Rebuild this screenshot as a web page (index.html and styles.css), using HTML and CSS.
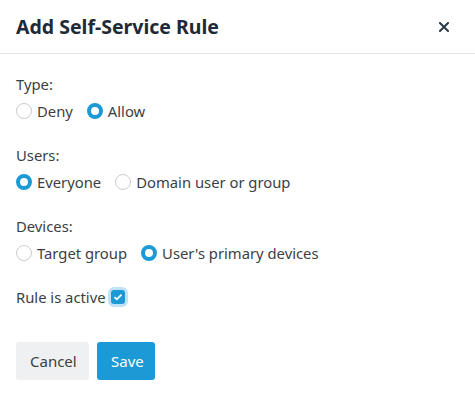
FILE: index.html
```html
<!DOCTYPE html>
<html>
<head>
<meta charset="utf-8">
<link rel="stylesheet" href="styles.css">
</head>
<body>
<div class="modal">
  <div class="header">
    <h1 class="title">Add Self-Service Rule</h1>
    <button class="close" aria-label="Close">
      <svg width="10" height="10" viewBox="0 0 10 10"><path d="M1 1L9 9M9 1L1 9" stroke="#2b3a4a" stroke-width="2" stroke-linecap="square"/></svg>
    </button>
  </div>
  <div class="body">
    <div class="group">
      <div class="label">Type:</div>
      <div class="options">
        <label class="opt"><span class="radio"></span>Deny</label>
        <label class="opt"><span class="radio on"></span>Allow</label>
      </div>
    </div>
    <div class="group">
      <div class="label">Users:</div>
      <div class="options">
        <label class="opt"><span class="radio on"></span>Everyone</label>
        <label class="opt"><span class="radio"></span>Domain user or group</label>
      </div>
    </div>
    <div class="group">
      <div class="label">Devices:</div>
      <div class="options">
        <label class="opt"><span class="radio"></span>Target group</label>
        <label class="opt"><span class="radio on"></span>User's primary devices</label>
      </div>
    </div>
    <div class="active">
      <span>Rule is active</span>
      <span class="check">
        <svg width="10" height="8" viewBox="0 0 10 8"><path d="M1.5 4.2L3.8 6.3L8.5 1.6" fill="none" stroke="#fff" stroke-width="1.8"/></svg>
      </span>
    </div>
    <div class="actions">
      <button class="btn cancel">Cancel</button>
      <button class="btn save">Save</button>
    </div>
  </div>
</div>
</body>
</html>
```
FILE: styles.css
```css
* { box-sizing: border-box; }
html, body { margin: 0; padding: 0; background: #fff; }
body {
  font-family: "Noto Sans", "Open Sans", sans-serif;
  color: #3b3f44;
  font-size: 14.8px;
  width: 475px;
  height: 402px;
  overflow: hidden;
}
.header {
  height: 54px;
  border-bottom: 1px solid #e3e5e8;
  display: flex;
  align-items: center;
  justify-content: space-between;
  padding: 0 25px 0 16px;
}
.title {
  margin: 0;
  font-size: 19.5px;
  font-weight: 700;
  color: #1f2a36;
}
.close {
  border: 0;
  background: none;
  padding: 0;
  width: 12px;
  height: 12px;
  display: flex;
  align-items: center;
  justify-content: center;
}
.body {
  padding: 19px 16px 0;
}
.group {
  display: flex;
  flex-direction: column;
  gap: 5px;
  margin-bottom: 22px;
}
.label { line-height: 22px; }
.options {
  display: flex;
  gap: 14px;
  line-height: 22px;
}
.opt {
  display: flex;
  align-items: center;
  gap: 5px;
}
.radio {
  width: 16px;
  height: 16px;
  border-radius: 50%;
  border: 1px solid #c8ccd1;
  background: #fff;
}
.radio.on {
  border: 4.5px solid #1c9ad6;
}
.active {
  display: flex;
  align-items: center;
  line-height: 22px;
}
.check {
  width: 14px;
  height: 14px;
  margin-left: 5px;
  border-radius: 3px;
  background: #1c9ad6;
  box-shadow: 0 0 0 3px #bfe3f5;
  display: flex;
  align-items: center;
  justify-content: center;
}
.actions {
  display: flex;
  gap: 8px;
  margin-top: 34px;
}
.btn {
  font-family: inherit;
  font-size: 15px;
  height: 38px;
  border: 0;
  border-radius: 3px;
  padding: 0 14px;
}
.cancel {
  background: #eff0f2;
  color: #3b3f44;
  width: 73px;
}
.save {
  background: #1c9ad6;
  color: #fff;
  width: 58px;
}
```
